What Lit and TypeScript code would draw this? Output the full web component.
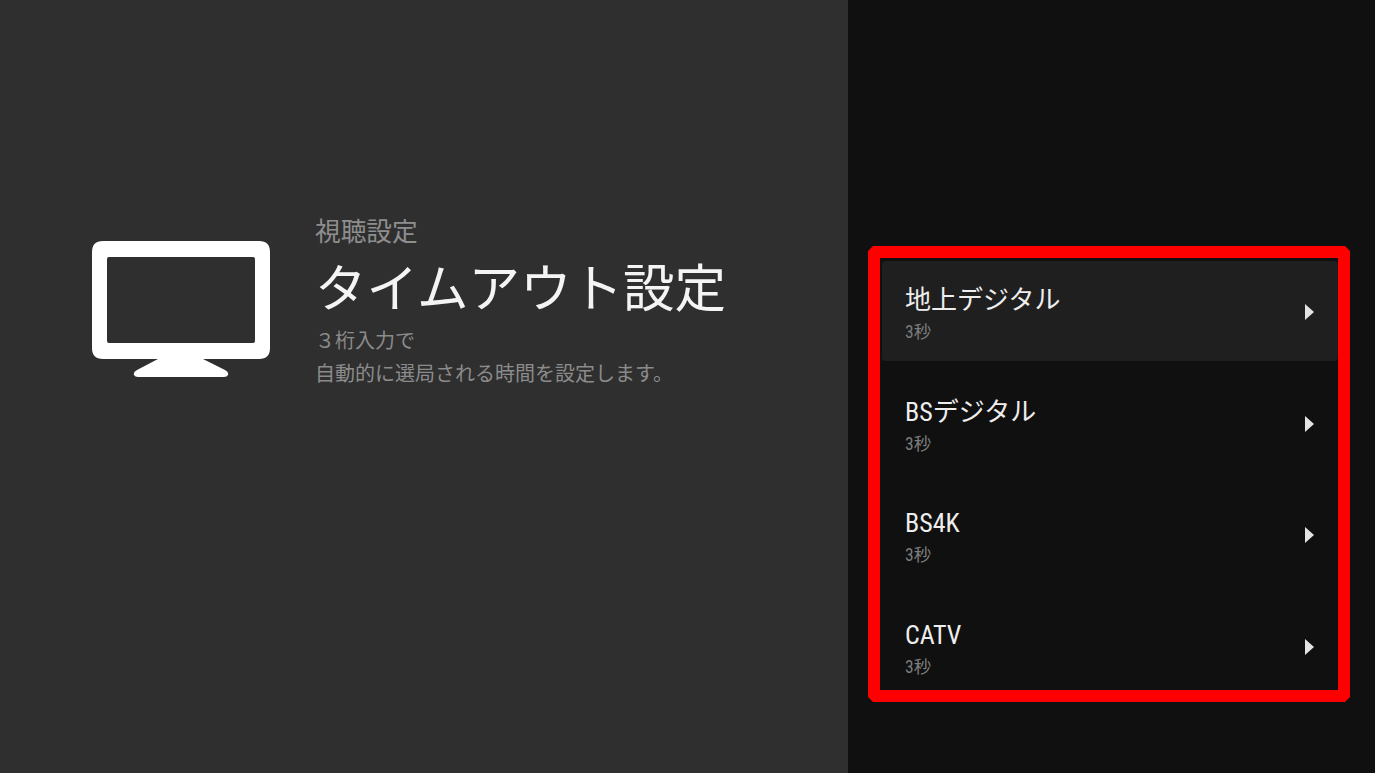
import { LitElement, html, css } from 'lit';
import { customElement, property } from 'lit/decorators.js';

@customElement('setting-row')
export class SettingRow extends LitElement {
  @property() label: string = '';
  @property() value: string = '';
  @property({ type: Boolean }) focused: boolean = false;
  static styles = css`
    :host {
      display: block;
      height: 111.67px;
      padding: 6px 0;
      box-sizing: border-box;
    }
    .row {
      height: 100px;
      display: flex;
      align-items: center;
      justify-content: space-between;
      padding: 0 24px 0 23px;
      border-radius: 4px;
      box-sizing: border-box;
    }
    .row.focused {
      background: #1f1f1f;
    }
    .text {
      margin-top: 4px;
    }
    .label {
      font: 400 26px/34px Roboto, "Noto Sans CJK JP", sans-serif;
      font-stretch: 75%;
      color: #eeeeee;
    }
    .value {
      font: 400 17.5px/22px Roboto, "Noto Sans CJK JP", sans-serif;
      font-stretch: 75%;
      color: #7c7c7c;
      margin-top: 4px;
    }
    svg {
      display: block;
      width: 9px;
      height: 16px;
      fill: #e4e4e4;
      margin-top: 2px;
    }
  `;
  render() {
    return html`
      <div class="row ${this.focused ? 'focused' : ''}">
        <div class="text">
          <div class="label">${this.label}</div>
          <div class="value">${this.value}</div>
        </div>
        <svg viewBox="0 0 9 16"><path d="M0 0 L9 8 L0 16 Z" /></svg>
      </div>
    `;
  }
}

@customElement('app-root')
export class AppRoot extends LitElement {
  static styles = css`
    :host {
      display: flex;
      width: 1375px;
      height: 773px;
      overflow: hidden;
      font-family: "Noto Sans CJK JP", "Noto Sans", sans-serif;
    }
    .info {
      width: 848px;
      flex: none;
      background: #2f2f2f;
      display: flex;
      align-items: flex-start;
      padding: 211px 0 0 92px;
      box-sizing: border-box;
      gap: 46px;
    }
    .tv {
      display: block;
      width: 178px;
      height: 138px;
      margin-top: 30px;
      flex: none;
      fill: #ffffff;
    }
    .copy {
      margin-left: -1px;
    }
    .crumb {
      font-size: 25.7px;
      line-height: 38px;
      color: #8e8e8e;
    }
    h1 {
      margin: 0;
      font-size: 51.5px;
      line-height: 72px;
      font-weight: 400;
      color: #f4f4f4;
    }
    .desc {
      margin-top: 2px;
      font-size: 20px;
      line-height: 33px;
      color: #8b8b8b;
    }
    .side {
      position: relative;
      flex: 1;
      background: #101010;
      padding: 255px 37px 0 34px;
      box-sizing: border-box;
    }
    .mark {
      position: absolute;
      left: 20px;
      top: 246px;
      width: 482px;
      height: 456px;
      border: 12px solid #ff0000;
      box-sizing: border-box;
      pointer-events: none;
      clip-path: polygon(
        5px 0,
        calc(100% - 5px) 0,
        100% 5px,
        100% calc(100% - 5px),
        calc(100% - 5px) 100%,
        5px 100%,
        0 calc(100% - 5px),
        0 5px
      );
    }
  `;
  render() {
    return html`
      <section class="info">
        <svg class="tv" viewBox="0 0 178 138">
          <path
            fill-rule="evenodd"
            d="M11 0 H167 Q178 0 178 11 V107 Q178 118 167 118 H111 L133 129 Q137 131 136 134 Q135 136 132 136 H46 Q43 136 42 134 Q41 131 45 129 L66 118 H11 Q0 118 0 107 V11 Q0 0 11 0 Z M17 16 Q15 16 15 18 V100 Q15 102 17 102 H161 Q163 102 163 100 V18 Q163 16 161 16 Z"
          />
        </svg>
        <div class="copy">
          <div class="crumb">視聴設定</div>
          <h1>タイムアウト設定</h1>
          <div class="desc">３桁入力で<br />自動的に選局される時間を設定します。</div>
        </div>
      </section>
      <section class="side">
        <setting-row label="地上デジタル" value="3秒" focused></setting-row>
        <setting-row label="BSデジタル" value="3秒"></setting-row>
        <setting-row label="BS4K" value="3秒"></setting-row>
        <setting-row label="CATV" value="3秒"></setting-row>
        <div class="mark"></div>
      </section>
    `;
  }
}
